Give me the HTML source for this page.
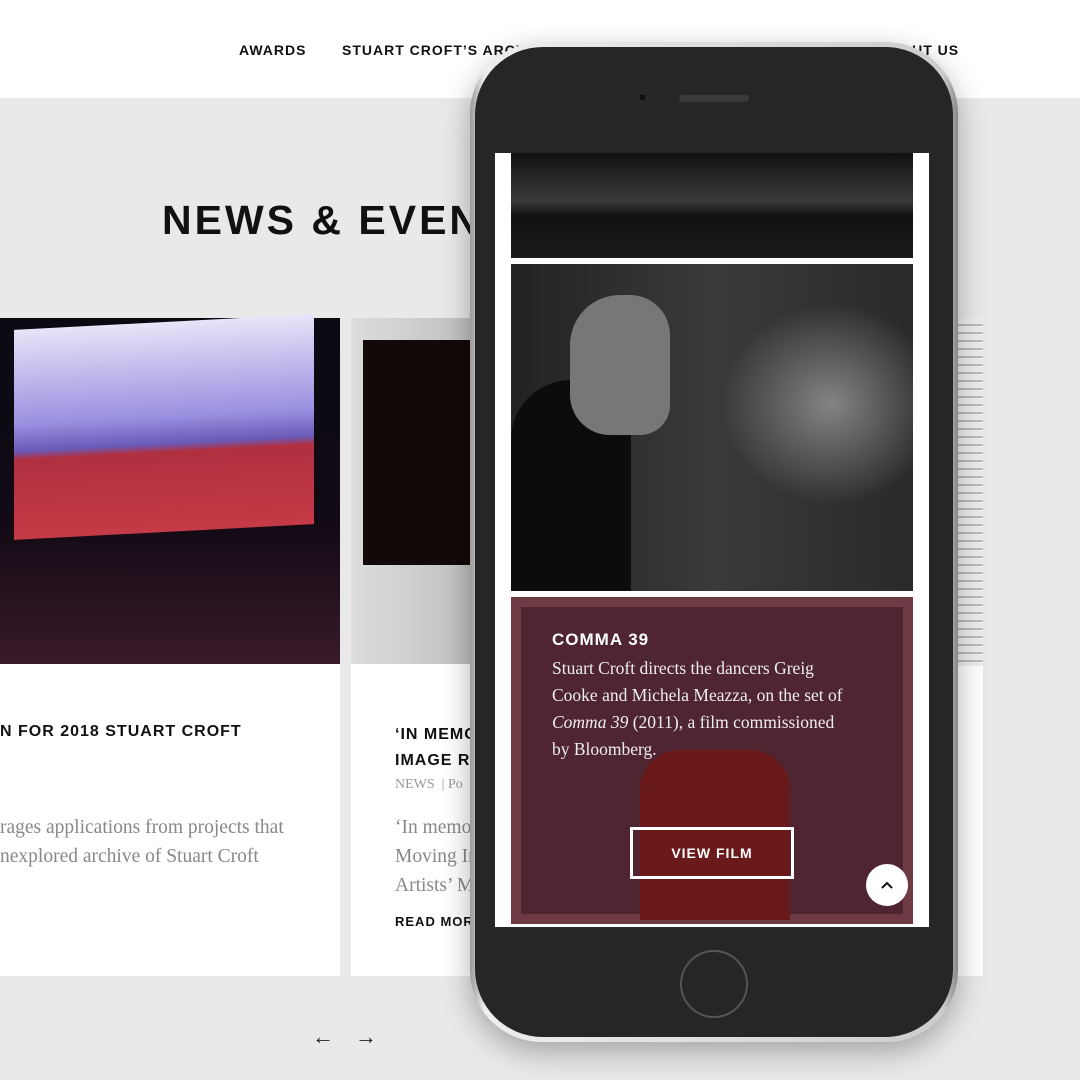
<!DOCTYPE html>
<html><head><meta charset="utf-8"><style>
*{margin:0;padding:0;box-sizing:border-box}
body{width:1080px;height:1080px;overflow:hidden;background:#e9e9e9;position:relative;font-family:"Liberation Sans",sans-serif}
.a{position:absolute}
.m{font-family:"Liberation Sans",sans-serif;font-weight:bold;letter-spacing:1px}
.s{font-family:"Liberation Serif",serif}
</style></head><body>
<div class="a" style="left:0;top:0;width:1080px;height:98px;background:#fff"></div>
<div class="a m" style="left:239px;top:42px;font-size:14px;color:#111">AWARDS</div>
<div class="a m" style="left:342px;top:42px;font-size:14px;color:#111;white-space:nowrap">STUART CROFT’S ARCHIVE</div>
<div class="a m" style="left:878px;top:42px;font-size:14px;color:#111;white-space:nowrap">ABOUT US</div>
<div class="a m" style="left:162px;top:197px;font-size:41px;color:#111;letter-spacing:3px;white-space:nowrap">NEWS &amp; EVENTS</div>

<!-- card 1 -->
<div class="a" style="left:0;top:318px;width:340px;height:658px;background:#fff"></div>
<div class="a" style="left:0;top:318px;width:340px;height:346px;background:linear-gradient(#0a0a12,#120a14 60%,#3a1a2a)"></div>
<div class="a" style="left:14px;top:322px;width:300px;height:210px;background:linear-gradient(#e8e4f8,#9a90e0 45%,#6a5ab8 58%,#b03040 62%,#c53a46);transform:skewY(-3deg)"></div>
<div class="a m" style="left:0;top:723px;font-size:16px;color:#111;white-space:nowrap">N FOR 2018 STUART CROFT</div>
<div class="a s" style="left:0;top:813px;font-size:19.5px;color:#888;line-height:29px;white-space:nowrap">rages applications from projects that<br>nexplored archive of Stuart Croft</div>

<!-- card 2 -->
<div class="a" style="left:351px;top:318px;width:140px;height:658px;background:#fff"></div>
<div class="a" style="left:351px;top:318px;width:140px;height:346px;background:linear-gradient(90deg,#ddd,#bbb)"></div>
<div class="a" style="left:363px;top:340px;width:110px;height:225px;background:#120a08"></div>
<div class="a m" style="left:395px;top:722px;font-size:16px;color:#111;line-height:26px;white-space:nowrap">‘IN MEMO<br>IMAGE R</div>
<div class="a s" style="left:395px;top:777px;font-size:14px;color:#999">NEWS &nbsp;| Po</div>
<div class="a s" style="left:395px;top:813px;font-size:19.5px;color:#888;line-height:29px">‘In memo<br>Moving In<br>Artists’ M</div>
<div class="a m" style="left:395px;top:914px;font-size:13px;color:#111">READ MORE</div>

<!-- card 3 -->
<div class="a" style="left:940px;top:318px;width:43px;height:348px;background:repeating-linear-gradient(#eee 0 6px,#bbb 6px 8px)"></div>
<div class="a" style="left:940px;top:666px;width:43px;height:310px;background:#fff"></div>

<div class="a" style="left:312px;top:1024px;font-size:22px;color:#222">←</div>
<div class="a" style="left:355px;top:1024px;font-size:22px;color:#222">→</div>

<!-- phone -->
<div class="a" style="left:470px;top:42px;width:488px;height:1000px;border-radius:72px;background:linear-gradient(90deg,#999,#eee 3%,#ccc 97%,#888);box-shadow:0 10px 30px rgba(0,0,0,.3)"></div>
<div class="a" style="left:475px;top:47px;width:478px;height:990px;border-radius:68px;background:#262626"></div>
<div class="a" style="left:638px;top:93px;width:9px;height:9px;border-radius:50%;background:#111;border:1px solid #333"></div>
<div class="a" style="left:679px;top:95px;width:70px;height:7px;border-radius:4px;background:#3a3a3a"></div>
<div class="a" style="left:680px;top:950px;width:68px;height:68px;border-radius:50%;border:2px solid #555"></div>
<div class="a" style="left:495px;top:153px;width:434px;height:774px;background:#fff"></div>
<div class="a" style="left:511px;top:153px;width:402px;height:105px;background:linear-gradient(#111,#3a3a3a 45%,#111 60%,#1a1a1a)"></div>
<div class="a" style="left:511px;top:264px;width:402px;height:327px;background:radial-gradient(ellipse 110px 100px at 320px 140px,rgba(200,200,200,.55),transparent),linear-gradient(90deg,#222,#3a3a3a 50%,#2a2a2a)"></div>
<div class="a" style="left:511px;top:380px;width:120px;height:211px;background:#0c0c0c;border-radius:60px 40px 0 0"></div>
<div class="a" style="left:570px;top:295px;width:100px;height:140px;background:#777;border-radius:50px 40px 30px 40px"></div>
<div class="a" style="left:511px;top:597px;width:402px;height:327px;background:#6e3a44"></div>
<div class="a" style="left:521px;top:607px;width:382px;height:307px;background:#4e2530"></div>
<div class="a" style="left:640px;top:750px;width:150px;height:170px;background:#6a1a1a;border-radius:40px 40px 0 0"></div>
<div class="a m" style="left:552px;top:630px;font-size:17px;color:#fff">COMMA 39</div>
<div class="a s" style="left:552px;top:655px;font-size:17.5px;color:#eee;line-height:27px;white-space:nowrap">Stuart Croft directs the dancers Greig<br>Cooke and Michela Meazza, on the set of<br><i>Comma 39</i> (2011), a film commissioned<br>by Bloomberg.</div>
<div class="a m" style="left:630px;top:827px;width:164px;height:52px;border:3px solid #fff;color:#fff;font-size:14px;text-align:center;line-height:46px">VIEW FILM</div>
<div class="a" style="left:866px;top:864px;width:42px;height:42px;border-radius:50%;background:#fff"></div>
<svg class="a" style="left:866px;top:864px" width="42" height="42"><path d="M16 24 L21 19 L26 24" stroke="#111" stroke-width="2" fill="none"/></svg>
</body></html>
